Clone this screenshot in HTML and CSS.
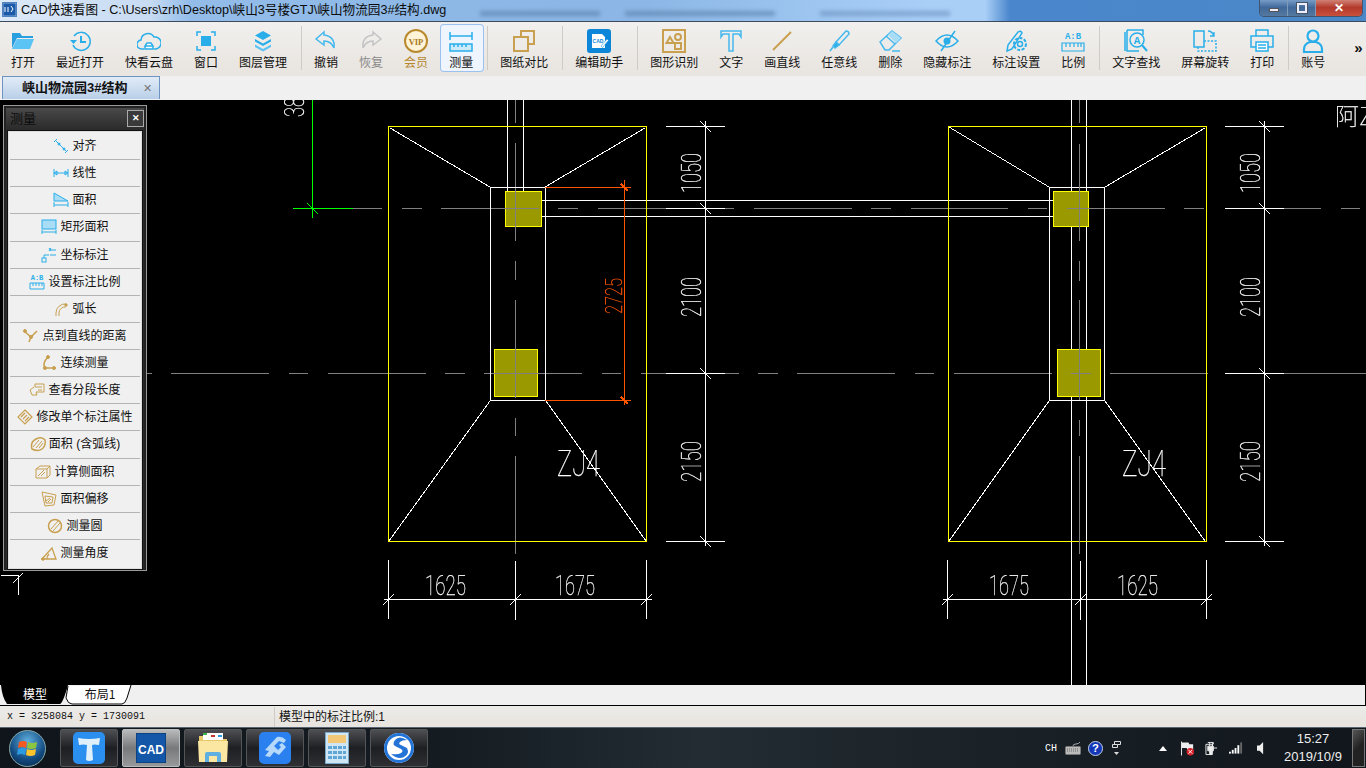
FILE: index.html
```html
<!DOCTYPE html>
<html lang="zh-CN">
<head>
    <meta charset="UTF-8">
    <title>CAD快速看图</title>
    <link rel="stylesheet" href="styles.css">
</head>
<body>
<!-- 标题栏 -->
<header class="titlebar">
    <svg class="app-icon" width="15" height="15" viewBox="0 0 15 15"><rect width="15" height="15" rx="1" fill="#1b5aa8"/><rect x="1" y="1" width="13" height="13" fill="none" stroke="#cfe0f5" stroke-width=".6"/><path d="M3 5v5M6 5v5M9 4l2 3-2 3" fill="none" stroke="#fff"/></svg>
    <span class="title-text">CAD快速看图 - C:\Users\zrh\Desktop\峡山3号楼GTJ\峡山物流园3#结构.dwg</span>
    <div class="win-btns">
        <span class="win-btn win-min"><i></i></span>
        <span class="win-btn win-max"><i></i></span>
        <span class="win-btn win-close">✕</span>
    </div>
</header>

<!-- 工具栏 -->
<nav class="toolbar">
    <div class="tool"><svg viewBox="0 0 24 24"><path d="M1 4h8l2 3h11v2H6L1 19z" fill="#2a9fe0"/><path d="M6 10h17l-4 10H1z" fill="#5cc4f4"/></svg><span>打开</span></div>
    <div class="tool"><svg viewBox="0 0 24 24" class="ln"><path d="M6 7a9 9 0 1 1-1 9"/><path d="M2 11h7l-3.500 4z" fill="#29aeea" stroke="none"/><path d="M13 7v6h5" stroke-width="2"/></svg><span>最近打开</span></div>
    <div class="tool"><svg viewBox="0 0 24 24" class="ln"><path d="M7 20H5a4.500 4.500 0 0 1-1-9 7 7 0 0 1 13-3 6 6 0 0 1 2 12h-2"/><path d="M8 20v-3l2-3h4l2 3v3z" fill="#fff"/><path d="M8 17h8"/></svg><span>快看云盘</span></div>
    <div class="tool"><svg viewBox="0 0 24 24" class="ln"><path d="M3 7V3h4M17 3h4v4M21 17v4h-4M7 21H3v-4"/><rect x="7" y="7" width="10" height="10" fill="#29aeea" stroke="none"/></svg><span>窗口</span></div>
    <div class="tool"><svg viewBox="0 0 24 24"><path d="M12 2l8 4.500-8 4.500-8-4.500z" fill="#29aeea"/><path d="M4 10l8 4.500 8-4.500v2.500l-8 4.500-8-4.500z" fill="#29aeea"/><path d="M4 15.500l8 4.500 8-4.500V18l-8 4.500L4 18z" fill="#5cc4f4"/></svg><span>图层管理</span></div>
    <i class="sep"></i>
    <div class="tool"><svg viewBox="0 0 24 24" class="ln ln-soft"><path d="M10 3L2 10l8 6v-4c5 0 8 2 10 7 1-8-3-12-10-13z"/></svg><span>撤销</span></div>
    <div class="tool tool-off"><svg viewBox="0 0 24 24" class="ln ln-off"><path d="M14 3l8 7-8 6v-4c-5 0-8 2-10 7-1-8 3-12 10-13z"/></svg><span>恢复</span></div>
    <div class="tool tool-gold"><svg viewBox="0 0 24 24"><circle cx="12" cy="12" r="11" fill="#fff4d8" stroke="#b98a2e" stroke-width="2"/><text x="12" y="15.500" text-anchor="middle" class="vip">VIP</text></svg><span>会员</span></div>
    <div class="tool tool-on"><svg viewBox="0 0 24 24" class="ln"><path d="M1 3v8M23 3v8M1 7h22"/><path d="M1 15h22v7H1zM5 15v3M9 15v3M13 15v3M17 15v3" fill="#cdeafa"/></svg><span>测量</span></div>
    <i class="sep"></i>
    <div class="tool"><svg viewBox="0 0 24 24" class="ln ln-gold"><path d="M9 8V2h13v13h-6"/><rect x="2" y="8" width="14" height="14"/></svg><span>图纸对比</span></div>
    <i class="sep"></i>
    <div class="tool"><svg viewBox="0 0 24 24"><rect width="24" height="24" rx="3" fill="#0b86d8"/><path d="M5 5h10l3 3v11H5z" fill="#fff"/><text x="11" y="14" text-anchor="middle" class="cad-mini">CAD</text><path d="M14 17l6-7 1.500 1.500-6 7z" fill="#fff" stroke="#0b86d8" stroke-width=".5"/></svg><span>编辑助手</span></div>
    <i class="sep"></i>
    <div class="tool"><svg viewBox="0 0 24 24" class="ln ln-gold"><rect x="1" y="1" width="22" height="22"/><circle cx="16" cy="8" r="3"/><path d="M8 8l3.500 6h-7z"/><rect x="13" y="14" width="6" height="6"/></svg><span>图形识别</span></div>
    <div class="tool"><svg viewBox="0 0 24 24" class="ln ln-soft"><path d="M2 2h20v6l-2-3h-6v17h-4V5H4L2 8z"/></svg><span>文字</span></div>
    <div class="tool"><svg viewBox="0 0 24 24" class="ln ln-gold"><path d="M3 21L21 3" stroke-width="2"/></svg><span>画直线</span></div>
    <div class="tool"><svg viewBox="0 0 24 24" class="ln ln-soft"><path d="M9 13L19 2q3 0 3 3L12 16z"/><path d="M9 13l3 3-4 3-2-2z" fill="#29aeea"/><path d="M6 18l-3 4"/></svg><span>任意线</span></div>
    <div class="tool"><svg viewBox="0 0 24 24" class="ln ln-soft"><path d="M2 13L14 2l9 7-12 12H7z"/><path d="M8 7l9 8"/><path d="M14 22h8" /><path d="M10 6l4-4 9 7-5 5z" fill="#a9dcf5" stroke="none"/></svg><span>删除</span></div>
    <div class="tool"><svg viewBox="0 0 24 24" class="ln"><path d="M1 12q11-12 22 0-11 12-22 0z"/><circle cx="12" cy="12" r="3.500" fill="#29aeea" stroke="none"/><path d="M6 22L20 2"/></svg><span>隐藏标注</span></div>
    <div class="tool"><svg viewBox="0 0 24 24" class="ln"><path d="M3 22l1-6L14 3q3-2 4 1L8 20z"/><circle cx="16" cy="15" r="2.500"/><circle cx="16" cy="15" r="6" stroke-dasharray="3 1.500" stroke-width="2"/></svg><span>标注设置</span></div>
    <div class="tool tool-wide"><svg viewBox="0 0 24 24" class="ln"><text x="12" y="9.500" text-anchor="middle" class="ab">A:B</text><path d="M1 14h22v8H1zM5 14v4M9 14v4M13 14v4M17 14v4M20 14v4" stroke-width="1.200"/></svg><span>比例</span></div>
    <i class="sep"></i>
    <div class="tool"><svg viewBox="0 0 24 24" class="ln"><path d="M3 1h16v5M3 1v21h12"/><path d="M1 3v19"/><circle cx="13" cy="11" r="7" fill="#f0eeeb"/><path d="M18 16l5 6" stroke-width="2"/><text x="13" y="14.500" text-anchor="middle" class="ab ab-big">A</text></svg><span>文字查找</span></div>
    <div class="tool"><svg viewBox="0 0 24 24" class="ln"><rect x="1" y="2" width="10" height="16"/><path d="M11 12h12v10H5v-4" stroke-dasharray="2 1.500"/><path d="M15 2q4 0 6 5M21 3v4h-4" stroke-width="1.300"/></svg><span>屏幕旋转</span></div>
    <div class="tool"><svg viewBox="0 0 24 24" class="ln"><path d="M6 7V1h12v6M6 18H1V7h22v11h-5"/><path d="M6 13h12v9H6zM8 16h8M8 19h8" fill="#fff"/></svg><span>打印</span></div>
    <i class="sep"></i>
    <div class="tool"><svg viewBox="0 0 24 24" class="ln ln-bold"><circle cx="12" cy="7" r="5.500"/><path d="M3 23v-3q0-5 6-7h6q6 2 6 7v3z"/></svg><span>账号</span></div>
    <span class="more">»</span>
</nav>

<!-- 文件标签 -->
<div class="filetabs">
    <div class="filetab"><b>峡山物流园3#结构</b><span class="filetab-x">✕</span></div>
</div>

<!-- 图纸区 -->
<main class="canvas">
    <svg class="drawing" width="1366" height="585" viewBox="0 100 1366 585">
        <g class="crisp" fill="none">
            <!-- 轴线 -->
            <path stroke="#808080" d="M147 373.500h5M171 373.500h98M289 373.500h19M328 373.500h98M445 373.500h20M484 373.500h98M602 373.500h19M641 373.500h25M725 373.500h14M758 373.500h20M797 373.500h98M915 373.500h19M954 373.500h98M1071 373.500h20M1110 373.500h98M1284 373.500h82"/>
            <path stroke="#808080" d="M353 208.500h29M402 208.500h20M441 208.500h98M558 208.500h20M598 208.500h68M725 208.500h9M754 208.500h98M871 208.500h20M911 208.500h97M1028 208.500h19M1067 208.500h98M1184 208.500h20M1284 208.500h37M1341 208.500h19"/>
            <path stroke="#808080" d="M515.500 100v23M515.500 143v98M515.500 261v19M515.500 300v98M515.500 418v18M515.500 456v98"/>
            <!-- 梁线 -->
            <path stroke="#fff" d="M507.500 100v91M523.500 100v91M1071.500 100v585M1086.500 100v585M541 200.500h512M541 216.500h512"/>
            <!-- 尺寸线 -->
            <path stroke="#fff" d="M666 126.500h59M666 208.500h59M666 373.500h59M666 541.500h59M705.500 121v425"/>
            <path stroke="#fff" d="M1225 126.500h59M1225 208.500h59M1225 373.500h59M1225 541.500h59M1264.500 121v425"/>
            <path stroke="#fff" d="M384 599.500h268M388.500 560v59M515.500 561v59M646.500 560v59"/>
            <path stroke="#fff" d="M943 599.500h269M947.500 560v59M1080.500 561v59M1206.500 560v59"/>
            <!-- 基础 -->
            <rect x="388.500" y="126.500" width="258" height="415" stroke="#ff0"/>
            <rect x="948.500" y="126.500" width="258" height="415" stroke="#ff0"/>
            <rect x="490.500" y="187.500" width="55" height="213" stroke="#fff"/>
            <rect x="1049.500" y="187.500" width="55" height="213" stroke="#fff"/>
            <!-- 柱 -->
            <rect x="505.500" y="191.500" width="36" height="35" fill="#9a9a00" stroke="#ff0"/>
            <rect x="494.500" y="349.500" width="43" height="47" fill="#9a9a00" stroke="#ff0"/>
            <rect x="1053.500" y="191.500" width="35" height="35" fill="#9a9a00" stroke="#ff0"/>
            <rect x="1057.500" y="349.500" width="43" height="47" fill="#9a9a00" stroke="#ff0"/>
            <path stroke="#808080" d="M515.500 191v36M505 208.500h34M515.500 349v48M494 373.500h44M1079.500 100v23M1079.500 144v97M1079.500 261v20M1079.500 300v100M1079.500 420v16M1079.500 456v98M1067 208.500h22M1071 373.500h20"/>
            <!-- 绿色标注 -->
            <path stroke="#0f0" d="M312.500 100v118M293 208.500h60"/>
            <!-- 测量标注 -->
            <path stroke="#f50" d="M545 187.500h85M545 400.500h85M624.500 180v225"/>
            <!-- 左下残线 -->
            <path stroke="#fff" d="M1 575.500h17M18.500 575v20"/>
        </g>
        <g class="crisp" fill="none" stroke="#fff">
            <path d="M390 128l100 59M645 128l-100 59M949 127l100 60M1205 128l-100 59M490 401L389 541M546 401l100 140M1049 401L949 541M1105 401l100 140"/>
            <path d="M700 121l11 11M700 203l11 11M700 368l11 11M700 536l11 11M1259 121l11 11M1259 203l11 11M1259 368l11 11M1259 536l11 11"/>
            <path d="M383 605l11-11M510 605l11-11M641 605l11-11M942 605l11-11M1075 605l11-11M1201 605l11-11M13 583l10-10"/>
            <path stroke="#0f0" d="M307 203l11 11"/>
            <path stroke="#f50" stroke-width="2" d="M621 184l7 7M621 397l7 7"/>
            <path stroke="#f50" d="M622 187.500h9M622 400.500h9"/>
        </g>
        <g class="cad-text">
            <text x="425" y="595" textLength="41" lengthAdjust="spacingAndGlyphs">1625</text>
            <text x="555" y="595" textLength="40" lengthAdjust="spacingAndGlyphs">1675</text>
            <text x="989" y="595" textLength="40" lengthAdjust="spacingAndGlyphs">1675</text>
            <text x="1117" y="595" textLength="41" lengthAdjust="spacingAndGlyphs">1625</text>
            <text x="557" y="476" textLength="43" lengthAdjust="spacingAndGlyphs" class="cad-lg">ZJ4</text>
            <text x="1122" y="476" textLength="44" lengthAdjust="spacingAndGlyphs" class="cad-lg">ZJ4</text>
            <text transform="translate(701 193) rotate(-90)" textLength="40" lengthAdjust="spacingAndGlyphs">1050</text>
            <text transform="translate(701 317) rotate(-90)" textLength="40" lengthAdjust="spacingAndGlyphs">2100</text>
            <text transform="translate(701 482) rotate(-90)" textLength="41" lengthAdjust="spacingAndGlyphs">2150</text>
            <text transform="translate(1260 193) rotate(-90)" textLength="40" lengthAdjust="spacingAndGlyphs">1050</text>
            <text transform="translate(1260 317) rotate(-90)" textLength="40" lengthAdjust="spacingAndGlyphs">2100</text>
            <text transform="translate(1260 482) rotate(-90)" textLength="41" lengthAdjust="spacingAndGlyphs">2150</text>
            <text transform="translate(304 117) rotate(-90)" textLength="20" lengthAdjust="spacingAndGlyphs">38</text>
            <text transform="translate(622 314) rotate(-90)" textLength="36" lengthAdjust="spacingAndGlyphs" class="cad-red">2725</text>
            <text x="1335" y="125" class="cad-sm">阿Z</text>
        </g>
    </svg>

    <!-- 测量面板 -->
    <aside class="panel">
        <div class="panel-head"><span>测量</span><em>✕</em></div>
        <ul class="panel-list">
            <li><svg class="pi b" viewBox="0 0 16 16"><path d="M1 4l3-3M3 3l10 10M12 15l3-3"/><circle cx="6" cy="6" r="1" fill="#29aeea"/><circle cx="11" cy="11" r="1" fill="#29aeea"/></svg>对齐</li>
            <li><svg class="pi b" viewBox="0 0 16 16"><path d="M1 4v8M15 4v8M1 8h14M1 8l3-2v4zM15 8l-3-2v4z"/></svg>线性</li>
            <li><svg class="pi b" viewBox="0 0 16 16"><path d="M1 1v8h14L1 1z" fill="#a9dcf5"/><path d="M1 10v5M15 10v5M1 13h14"/></svg>面积</li>
            <li><svg class="pi b" viewBox="0 0 16 16"><rect x="1" y="1" width="14" height="9" fill="#a9dcf5"/><path d="M1 11v4M15 11v4M1 13h14"/></svg>矩形面积</li>
            <li><svg class="pi b" viewBox="0 0 16 16"><rect x="1" y="11" width="4" height="4"/><path d="M3 11V8h5M9 3h6M9 8h6M8 1l2 3M10 1L8 4"/></svg>坐标标注</li>
            <li><svg class="pi b" viewBox="0 0 16 16"><text x="8" y="6" text-anchor="middle" class="ab ab-sm">A:B</text><path d="M1 9h14v6H1zM4 9v3M7 9v3M10 9v3M13 9v3"/></svg>设置标注比例</li>
            <li><svg class="pi g" viewBox="0 0 16 16"><path d="M3 15v-3A9 9 0 0 1 13 3"/><path d="M6 15v-3a6 6 0 0 1 7-6"/><circle cx="13" cy="4" r="1.200" fill="#c8a050"/></svg>弧长</li>
            <li><svg class="pi g" viewBox="0 0 16 16"><path d="M1 3l7 6 6-6M8 9l-2 5" stroke-width="1.500"/><circle cx="2" cy="3" r="1.500" fill="#c8a050"/><circle cx="8" cy="9" r="1.500" fill="#c8a050"/></svg>点到直线的距离</li>
            <li><svg class="pi g" viewBox="0 0 16 16"><path d="M7 2Q1 8 4 13h9" stroke-width="1.500"/><circle cx="7" cy="2" r="1.500" fill="#c8a050"/><circle cx="4" cy="13" r="1.500" fill="#c8a050"/><circle cx="13" cy="13" r="1.500" fill="#c8a050"/></svg>连续测量</li>
            <li><svg class="pi g" viewBox="0 0 16 16"><path d="M5 5L1 8l2 5h5l-1-3h8V2H6v3h3M9 5h4M9 8h4"/></svg>查看分段长度</li>
            <li><svg class="pi g" viewBox="0 0 16 16"><path d="M8 1l7 7-7 7-7-7zM4 8l4-4M6 10l4-4M8 12l4-4" stroke-width="1.200"/></svg>修改单个标注属性</li>
            <li><svg class="pi g" viewBox="0 0 16 16"><path d="M2 13Q0 6 6 3t9 1q1 6-3 9t-10 0z" stroke-width="1.500"/><path d="M3 11l6-7M6 12l6-7M9 12l4-5"/></svg>面积 (含弧线)</li>
            <li><svg class="pi g" viewBox="0 0 16 16"><path d="M1 5l4-3h10v9l-3 3H1zM1 5h11v9M12 5l3-3"/><path d="M3 12l6-6M6 12l4-4"/></svg>计算侧面积</li>
            <li><svg class="pi g" viewBox="0 0 16 16"><path d="M1 1l14 3-2 10-9 1zM4 5l8 1-1 6-6 0z"/><path d="M5 10l4-3M7 11l3-3"/></svg>面积偏移</li>
            <li><svg class="pi g" viewBox="0 0 16 16"><circle cx="8" cy="8" r="6.500" stroke-width="1.500"/><path d="M4 11l7-8M6 13l7-8"/></svg>测量圆</li>
            <li><svg class="pi g" viewBox="0 0 16 16"><path d="M1 14L11 3l4 11zM6 14q0-3 2-5" stroke-width="1.300"/><circle cx="2" cy="14" r="1.300" fill="#c8a050"/></svg>测量角度</li>
        </ul>
    </aside>
</main>

<!-- 模型/布局 -->
<div class="layouttabs">
    <svg width="140" height="20" viewBox="0 0 140 20">
        <path d="M1 0q1 12 6 19h53q3-1 8-19z" fill="#000"/>
        <path d="M68 1q-2 12-2 12 2 6 6 6h50q3 0 5-6l4-13" fill="#fff" stroke="#000"/>
        <text x="35" y="14" text-anchor="middle" class="lt-a">模型</text>
        <text x="100" y="14" text-anchor="middle" class="lt-b">布局1</text>
    </svg>
</div>

<!-- 状态栏 -->
<footer class="statusbar">
    <span class="coords">x = 3258084 y = 1730091</span>
    <span class="scale">模型中的标注比例:1</span>
</footer>

<!-- 任务栏 -->
<div class="taskbar">
    <div class="orb"><svg viewBox="0 0 24 24" width="24" height="24"><path d="M3 6q4-2 8 0l-1 6q-4-2-8 0z" fill="#f25a22"/><path d="M12 6q4 2 9 0l-1 6q-5 2-9 0z" fill="#8cc63f"/><path d="M2 13q4-2 8 0l-1 6q-4-2-8 0z" fill="#2a9be0"/><path d="M11 13q4 2 9 0l-1 6q-5 2-9 0z" fill="#fdc42b"/></svg></div>
    <div class="task"><svg width="32" height="32" viewBox="0 0 32 32"><rect width="32" height="32" rx="5" fill="#2b8ff0"/><path d="M5 6q11 2 22 0l-1 7q-5-1-7 0l1 15q-4 2-7 0l1-15q-3-1-8 0z" fill="#dff0fb"/></svg></div>
    <div class="task task-on"><svg width="30" height="30" viewBox="0 0 30 30"><rect width="30" height="30" rx="1" fill="#1456a8" stroke="#07305f"/><text x="15" y="21" text-anchor="middle" class="task-cad" textLength="26" lengthAdjust="spacingAndGlyphs">CAD</text></svg></div>
    <div class="task"><svg width="32" height="30" viewBox="0 0 32 30"><path d="M2 3h10l2 3h16v4H2z" fill="#e8c96a"/><rect x="6" y="0" width="20" height="7" fill="#fff"/><rect x="6" y="0" width="4" height="2" fill="#3cb54a"/><rect x="14" y="2" width="4" height="2" fill="#c0392b"/><rect x="21" y="2" width="4" height="2" fill="#2a9be0"/><path d="M1 8h30l-1 21H2z" fill="#fbe7a1"/><path d="M8 29v-8q0-2 2-2h12q2 0 2 2v8h-4v-6h-8v6z" fill="#5fb0e0"/></svg></div>
    <div class="task"><svg width="32" height="32" viewBox="0 0 32 32"><rect width="32" height="32" rx="5" fill="#2a80ee"/><path d="M6 18L18 5q5-1 9 3l-2 3-5-2-5 5 4 4 3-3-2-2 3-2 4 4-7 8-5-3-4 5-5-1 4-5z" fill="#b5d8fb"/></svg></div>
    <div class="task"><svg width="24" height="32" viewBox="0 0 24 32"><rect x=".5" y=".5" width="23" height="31" fill="#cfe6f5" stroke="#7aa7c4"/><rect x="3" y="3" width="18" height="8" fill="#f2c778"/><g fill="#5fa5d6"><rect x="3" y="14" width="4" height="3"/><rect x="8" y="14" width="4" height="3"/><rect x="13" y="14" width="4" height="3"/><rect x="18" y="14" width="3" height="3"/><rect x="3" y="19" width="4" height="3"/><rect x="8" y="19" width="4" height="3"/><rect x="13" y="19" width="4" height="3"/><rect x="18" y="19" width="3" height="3"/><rect x="3" y="24" width="4" height="3"/><rect x="8" y="24" width="4" height="3"/><rect x="13" y="24" width="4" height="3"/><rect x="18" y="24" width="3" height="3"/></g></svg></div>
    <div class="task"><svg width="30" height="30" viewBox="0 0 30 30"><circle cx="15" cy="15" r="15" fill="#fff"/><path d="M23 7q-8-5-12 0t2 7l4 2q3 2 0 4t-10 1q7 6 13 3t3-9l-6-3q-3-1-1-3t7-2z" fill="#2474d8"/><path d="M15 0a15 15 0 0 0 0 30 15 15 0 0 0 0-30zm0 3a12 12 0 0 1 0 24 12 12 0 0 1 0-24z" fill="#2474d8"/></svg></div>
    <div class="tray">
        <span class="tray-ch">CH</span>
        <svg class="tray-kbd" width="16" height="13" viewBox="0 0 16 13"><rect x=".5" y="4.500" width="15" height="8" rx="1" fill="#bbb" stroke="#777"/><path d="M2 7h12M2 9h12" stroke="#666" stroke-dasharray="1 1"/><path d="M8 4q0-2 3-2t4-2" stroke="#aaa" fill="none"/></svg>
        <svg class="tray-help" width="15" height="15" viewBox="0 0 16 16"><circle cx="8" cy="8" r="7.500" fill="#1437b8" stroke="#cde"/><text x="8" y="12" text-anchor="middle" class="tray-q">?</text></svg>
        <svg class="tray-win" width="9" height="15" viewBox="0 0 9 15"><path d="M.5 3.500h5v3h-5zM2.500 3.500v-3h6v3h-3" fill="none" stroke="#ddd"/><path d="M2 11h5l-2.500 3z" fill="#ddd"/></svg>
        <svg class="tray-up" width="8" height="5" viewBox="0 0 8 5"><path d="M0 5l4-5 4 5z" fill="#fff"/></svg>
        <svg class="tray-flag" width="14" height="15" viewBox="0 0 15 15"><path d="M.5 0v15" stroke="#fff"/><path d="M1 1h7l1 2h4v6H7L6 7H1z" fill="#eee"/><circle cx="10" cy="11" r="4" fill="#d8232a"/><path d="M8 9l4 4M12 9l-4 4" stroke="#fff"/></svg>
        <svg class="tray-plug" width="13" height="15" viewBox="0 0 14 15"><path d="M1 3h7v11H1zM3 1h6v2" fill="none" stroke="#eee"/><path d="M3 5h6v5H7v4H5v-4H3zM5 5V1M8 5V1M9 7h4" fill="#eee" stroke="#eee"/></svg>
        <svg class="tray-net" width="14" height="12" viewBox="0 0 15 12"><rect x="0" y="10" width="2" height="2" fill="#fff"/><rect x="3" y="8" width="2" height="4" fill="#fff"/><rect x="6" y="6" width="2" height="6" fill="#fff"/><rect x="9" y="3" width="2" height="9" fill="#fff"/><rect x="12" y="0" width="2" height="12" fill="#666"/></svg>
        <svg class="tray-vol" width="7" height="14" viewBox="0 0 8 14"><path d="M0 4h3l4-4v14l-4-4H0z" fill="#eee"/></svg>
        <div class="clock"><span>15:27</span><span>2019/10/9</span></div>
        <i class="show-desk"></i>
    </div>
</div>
</body>
</html>
```

FILE: styles.css
```css
* {
    box-sizing: border-box;
}
html, body {
    margin: 0;
    width: 1366px;
    height: 768px;
    overflow: hidden;
}
body {
    display: flex;
    flex-direction: column;
    font: 12px/16px "Liberation Sans", "Noto Sans CJK SC", sans-serif;
    color: #111;
    background: #000;
}

/* 标题栏 */
.titlebar {
    position: relative;
    height: 22px;
    flex: none;
    display: flex;
    align-items: center;
    padding: 0 3px 2px 2px;
    border-bottom: 1px solid #3c4b5e;
    overflow: hidden;
    background: linear-gradient(90deg, #dce9f8 0, #c7dbf3 150px, #93bce9 190px, #8db8e6 450px, #8bb6e5 640px, #a9cff7 930px, #a9cff7 985px, #4a86cc 1010px, #4b88c8 1366px);
}
/* 背后窗口透过来的模糊标题 */
.titlebar::before {
    content: "";
    position: absolute;
    top: 11px;
    left: 480px;
    width: 520px;
    height: 5px;
    filter: blur(2px);
    background:
        linear-gradient(#4f74a0, #4f74a0) 0 0 / 120px 5px no-repeat,
        linear-gradient(#4f74a0, #4f74a0) 145px 0 / 150px 5px no-repeat,
        linear-gradient(#5f86b4, #5f86b4) 340px 0 / 130px 5px no-repeat;
    opacity: .55;
}
.app-icon {
    flex: none;
    margin-right: 4px;
}
.title-text {
    font-size: 12.620px;
    color: #0c0c0c;
    white-space: nowrap;
}
.win-btns {
    display: flex;
    margin-left: auto;
    height: 18px;
    margin-top: -3px;
    border: 1px solid #3f5570;
    border-top: none;
    border-radius: 0 0 5px 5px;
    overflow: hidden;
}
.win-btn {
    display: flex;
    align-items: center;
    justify-content: center;
    width: 28px;
    background: linear-gradient(#7ea3cc, #40689a 50%, #55799f);
    border-right: 1px solid #7f9bba;
}
.win-min i {
    width: 10px;
    height: 4px;
    margin-top: 5px;
    background: #eef;
    border: 1px solid #555;
}
.win-max i {
    width: 10px;
    height: 10px;
    background: transparent;
    border: 2px solid #eef;
    outline: 1px solid #456;
}
.win-close {
    width: 46px;
    border: none;
    color: #fff;
    font-size: 12px;
    font-weight: bold;
    background: linear-gradient(#d58a7e, #b23a2c 50%, #c9503c);
}

/* 工具栏 */
.toolbar {
    height: 54px;
    flex: none;
    display: flex;
    align-items: center;
    gap: 1px;
    padding: 0 0 2px 1px;
    background: linear-gradient(#f1f0ee, #e8e4df);
}
.tool {
    height: 48px;
    padding: 5px 10px 0;
    display: flex;
    flex-direction: column;
    align-items: center;
    flex: none;
    border-radius: 4px;
}
.tool svg {
    width: 24px;
    height: 24px;
    flex: none;
}
.tool span {
    margin-top: 2px;
    white-space: nowrap;
    color: #111;
}
.tool-off span {
    color: #8a8a8a;
}
.tool-gold span {
    color: #b5862c;
}
.tool-on {
    margin: 0 -1px 0 1px;
    padding: 5px 11px 0 9px;
    background: #eef5fe;
    box-shadow: inset 0 0 0 1px #9cc0f0;
}
.sep {
    width: 1px;
    height: 44px;
    flex: none;
    margin: 0 1px 0 3px;
    background: #cfccc8;
}
.more {
    margin-left: 18px;
    font-size: 15px;
    font-weight: bold;
    color: #111;
}
.ln {
    fill: none;
    stroke: #29aeea;
    stroke-width: 1.500;
}
.ln-soft {
    stroke: #45b9ee;
}
.ln-off {
    stroke: #c4c4c4;
}
.ln-gold {
    stroke: #c8a050;
    stroke-width: 2;
}
.ln-bold {
    stroke-width: 2.200;
}
.vip {
    font: bold 8.500px "Liberation Serif", serif;
    fill: #a87820;
    stroke: none;
}
.cad-mini {
    font: bold 5px "Liberation Sans", sans-serif;
    fill: #0b86d8;
}
.ab {
    font: bold 9px "Liberation Mono", monospace;
    fill: #29aeea;
    stroke: none;
}
.ab-big {
    font-size: 11px;
}
.ab-sm {
    font-size: 7px;
}

/* 文件标签 */
.filetabs {
    height: 24px;
    flex: none;
    padding: 0 0 1px 2px;
    background: #f0f0f0;
}
.filetab {
    width: 158px;
    height: 23px;
    display: flex;
    align-items: center;
    justify-content: space-between;
    padding: 0 7px 0 19px;
    border: 1px solid #6f94c4;
    border-bottom: none;
    background: linear-gradient(#e2ebf7, #b8cfe8);
}
.filetab b {
    font-size: 13px;
}
.filetab-x {
    color: #777;
    font-size: 11px;
}

/* 图纸区 */
.canvas {
    position: relative;
    height: 585px;
    flex: none;
    background: #000;
}
.drawing {
    display: block;
}
.crisp {
    shape-rendering: crispEdges;
}
.cad-text {
    opacity: .999;
}
.cad-text text {
    font: 100 28px Roboto, sans-serif;
    fill: #fff;
    stroke: #fff;
    stroke-width: .25;
}
.cad-text .cad-lg {
    font-size: 36px;
}
.cad-text .cad-red {
    font-size: 24px;
    fill: #f50;
    stroke: #f50;
}
.cad-text .cad-sm {
    font: 100 24px "Noto Sans CJK SC", sans-serif;
}

/* 测量面板 */
.panel {
    position: absolute;
    left: 3px;
    top: 5px;
    width: 144px;
    height: 466px;
    padding: 0 4px 1px;
    border: 1px solid #9a9a9a;
    background: linear-gradient(#4c4c4c, #2a2a2a 24px);
    box-shadow: inset 0 0 0 2px #222;
}
.panel-head {
    height: 25px;
    display: flex;
    align-items: center;
    justify-content: space-between;
    padding: 0 0 0 2px;
    color: #0c0c0c;
    font-size: 13px;
}
.panel-head em {
    width: 17px;
    height: 17px;
    margin-right: -2px;
    border: 1px solid #aaa;
    background: #3a3a3a;
    color: #fff;
    font: bold 9px/15px "Liberation Sans", sans-serif;
    text-align: center;
}
.panel-list {
    list-style: none;
    margin: 0;
    padding: 1px;
    height: 438px;
    border: 1px solid #ddd;
    outline: 1px solid #111;
    display: grid;
    grid-template-rows: repeat(16, 1fr);
    background: #f0f0f0;
}
.panel-list li {
    display: flex;
    align-items: center;
    justify-content: center;
    gap: 3px;
    border-bottom: 1px solid #b4b4b4;
    white-space: nowrap;
    color: #111;
}
.panel-list li:last-child {
    border-bottom: none;
}
.pi {
    width: 16px;
    height: 16px;
    flex: none;
    fill: none;
}
.pi.b {
    stroke: #29aeea;
}
.pi.g {
    stroke: #c8a050;
}

/* 模型/布局 */
.layouttabs {
    height: 21px;
    flex: none;
    background: #f0f0f0;
    border-bottom: 1px solid #000;
    border-right: 1px solid #000;
}
.layouttabs svg {
    display: block;
}
.lt-a, .lt-b {
    font: 12px "Noto Sans CJK SC", sans-serif;
}
.lt-a {
    fill: #fff;
}
.lt-b {
    fill: #111;
}

/* 状态栏 */
.statusbar {
    height: 21px;
    flex: none;
    display: flex;
    align-items: center;
    padding-left: 7px;
    background: linear-gradient(#ecebe8, #e8e4df);
}
.coords {
    width: 267px;
    font: 10px "Liberation Mono", monospace;
    color: #111;
}
.scale {
    padding-left: 4px;
    border-left: 1px solid #cfccc8;
    line-height: 20px;
}

/* 任务栏 */
.taskbar {
    height: 41px;
    flex: none;
    display: flex;
    align-items: center;
    gap: 4px;
    border-top: 1px solid #5a6470;
    background: linear-gradient(90deg, #0f151b, #141c22 430px, #232c33 700px, #1a2127 1000px, #10161b);
}
.orb {
    width: 37px;
    height: 37px;
    flex: none;
    display: flex;
    align-items: center;
    justify-content: center;
    margin: 0 10px 0 9px;
    border-radius: 50%;
    border: 1px solid #8aa;
    background: radial-gradient(circle at 50% 30%, #5fb0e0, #124a80 60%, #08233f);
}
.task {
    width: 58px;
    height: 38px;
    flex: none;
    display: flex;
    align-items: center;
    justify-content: center;
    border: 1px solid #555;
    border-radius: 2px;
    background: linear-gradient(#4d4f52, #1d1f22 50%, #2e3033);
}
.task-on {
    border-color: #bbb;
    background: linear-gradient(#b8babc, #77797b 50%, #97999b);
}
.task-cad {
    font: bold 13px "Liberation Sans", sans-serif;
    fill: #fff;
}
.tray {
    margin-left: auto;
    height: 100%;
    display: flex;
    align-items: center;
    color: #fff;
}
.tray-ch {
    font: 10px "Liberation Mono", monospace;
}
.tray-kbd {
    margin-left: 8px;
}
.tray-help {
    margin-left: 7px;
}
.tray-win {
    margin-left: 9px;
}
.tray-up {
    margin-left: 38px;
}
.tray-flag {
    margin-left: 14px;
}
.tray-plug {
    margin-left: 10px;
}
.tray-net {
    margin-left: 11px;
}
.tray-vol {
    margin-left: 14px;
}
.tray-q {
    font: bold 12px "Liberation Sans", sans-serif;
    fill: #fff;
}
.clock {
    width: 64px;
    margin-left: 17px;
    display: flex;
    flex-direction: column;
    align-items: center;
    line-height: 18px;
    font-size: 13px;
    color: #eee;
}
.show-desk {
    width: 13px;
    height: 38px;
    margin: 0 1px 0 7px;
    border: 1px solid #777;
    background: linear-gradient(135deg, #555, #222 50%);
}
```
